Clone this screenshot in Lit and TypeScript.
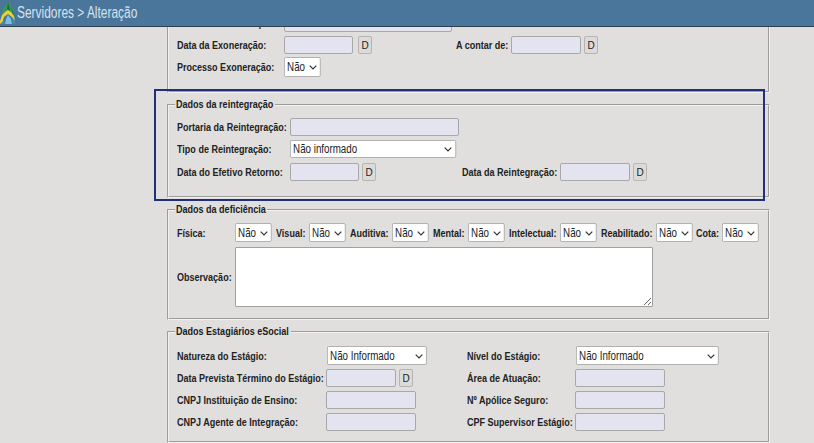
import { LitElement, html, css } from "lit";
import { customElement } from "lit/decorators.js";

@customElement("app-root")
export class AppRoot extends LitElement {
  static styles = css`
    :host { display: block; width: 814px; height: 443px; overflow: hidden; position: relative; background: #e0dfdd; font-family: "Liberation Sans", Arial, sans-serif; color: #1c1c1c; }
    .top { height: 26px; background: #4a769b; border-bottom: 1px solid #2f3f4c; display: flex; align-items: center; gap: 1px; color: #d5e2ee; box-sizing: content-box; }
    .top svg { display: block; flex: none; }
    .title { font-size: 16px; white-space: nowrap; transform: scaleX(.745); transform-origin: left center; }
    .scroll { height: 416px; overflow: hidden; padding-left: 167px; width: 603px; }
    fieldset { margin: 0 0 6px; padding: 0 8px; border: 2px groove #f2f1ef; box-sizing: border-box; width: 603px; display: block; min-width: 0; }
    fieldset.first { margin-top: -30px; height: 96px; }
    fieldset.reint { height: 99px; }
    fieldset.def { height: 116px; }
    fieldset.est { height: 117px; margin-bottom: 0; }
    legend { font-size: 11px; font-weight: bold; padding: 0 1px; margin-left: -2px; line-height: 12px; height: 12px; box-sizing: content-box; }
    legend span { display: block; white-space: nowrap; margin-top: -1px; transform: scaleX(.82); transform-origin: left center; }
    .l1 { width: 98px; } .l2 { width: 90px; } .l3 { width: 114px; }
    .row { display: flex; align-items: center; }
    label { display: block; font-size: 11px; font-weight: bold; white-space: nowrap; flex: none; transform: scaleX(.82); transform-origin: left center; color: #222; }
    input { box-sizing: border-box; height: 18px; background: #e4e3f0; border: 1px solid #a8a8a8; border-radius: 2px; padding: 0; margin: 0; flex: none; }
    button { box-sizing: border-box; width: 14px; height: 18px; padding: 0; margin: 0 0 0 3px; background: #dcdbd9; border: 1px solid #b4b4b4; border-radius: 2px; font: 10px "Liberation Sans", sans-serif; color: #222; flex: none; }
    button.far { margin-left: 5px; }
    .sel { position: relative; display: block; flex: none; height: 19px; }
    .sel.h18 { height: 18px; } .sel.h20 { height: 20px; }
    select { appearance: none; -webkit-appearance: none; display: block; box-sizing: border-box; height: 100%; width: calc(100% / 0.78); transform: scaleX(.78); transform-origin: left center; background: #fff; border: 1px solid #a8a8a8; border-radius: 2px; padding: 0 0 0 3px; margin: 0; font: 12.5px "Liberation Sans", sans-serif; color: #222; }
    .sel svg { position: absolute; right: 4px; top: 50%; margin-top: -2px; pointer-events: none; display: block; }
    textarea { box-sizing: border-box; width: 418px; height: 60px; background: #fff; border: 1px solid #a0a0a0; border-radius: 1px; margin: 0; padding: 0; flex: none; display: block; }
    .mark { position: absolute; left: 154px; top: 89px; width: 611px; height: 112px; box-sizing: border-box; border: 2px solid #1f2f7c; pointer-events: none; }

    .w26 { width: 26px; } .w33 { width: 33px; } .w35 { width: 35px; } .w42 { width: 42px; } .w51 { width: 51px; } .w55 { width: 55px; } .w58 { width: 58px; }
    .w69 { width: 69px; } .w70 { width: 70px; } .w90 { width: 90px; } .w98 { width: 98px; } .w107 { width: 107px; } .w108 { width: 108px; } .w109 { width: 109px; } .w113 { width: 113px; } .w149 { width: 149px; } .w168 { width: 168px; } .w169 { width: 169px; }
    .s37 { width: 37px; } .s100 { width: 100px; } .s143 { width: 143px; } .s166 { width: 166px; }
    .ml1 { margin-left: 1px; } .ml3 { margin-left: 3px; } .ml4 { margin-left: 4px; } .ml40 { margin-left: 40px; } .ml51 { margin-left: 51px; } .ml54 { margin-left: 54px; } .ml84 { margin-left: 84px; } .ml86 { margin-left: 86px; }
    .mt3 { margin-top: 3px; } .mt4 { margin-top: 4px; } .mt5 { margin-top: 5px; } .mt7 { margin-top: 7px; } .mt8 { margin-top: 8px; } .mt15 { margin-top: 15px; }
  `;

  private d(cls = "") { return html`<button class=${cls}>D</button>`; }
  private sel(text: string, cls: string) {
    return html`<span class="sel ${cls}"><select><option>${text}</option></select><svg width="8" height="5" viewBox="0 0 8 5"><path d="M.7.7 4 4 7.3.7" fill="none" stroke="#333" stroke-width="1.2"/></svg></span>`;
  }

  render() {
    return html`
      <div class="top">
        <svg width="16" height="26" viewBox="0 0 16 26">
          <path d="M1 15 L3 9 L5 7 L7 3 L9 2 L11 6 L13 9 L15 15 L12 13 L8 10 L4 13 Z" fill="#3a9a4f" />
          <path d="M8 2 L10 10 L9 11 L7 9 Z" fill="#1f6f3d" />
          <path d="M11 6 L15 15 L16 20 L12 13 Z" fill="#2b7d72" />
          <path d="M0 21 L2 15 L5 12 L8 10 L11 12 L14 16 L15 21 L12 17 L8 14 L4 17 L2 24 L0 24 Z" fill="#e8cf3c" />
          <path d="M5 24 L6 19 L8 15 L11 19 L12 24 Z" fill="#79bde6" />
          <path d="M0 24 L4 20 L4 24 Z M12 18 L15 22 L15 24 L13 24 Z" fill="#3f8fc0" />
        </svg>
        <span class="title">Servidores &gt; Alteração</span>
      </div>
      <div class="scroll">
        <fieldset class="first">
          <div class="row mt15">
            <label class="w107">Motivo da Exoneração:</label>
            <input class="w168" />
          </div>
          <div class="row mt4">
            <label class="w107">Data da Exoneração:</label>
            <input class="w69" />${this.d("far")}
            <label class="ml84 w55">A contar de:</label>
            <input class="w70" />${this.d()}
          </div>
          <div class="row mt3">
            <label class="w107">Processo Exoneração:</label>
            ${this.sel("Não", "s37 h20")}
          </div>
        </fieldset>

        <fieldset class="reint">
          <legend class="l1"><span>Dados da reintegração</span></legend>
          <div class="row mt7">
            <label class="w113">Portaria da Reintegração:</label>
            <input class="w169" />
          </div>
          <div class="row mt4">
            <label class="w113">Tipo de Reintegração:</label>
            ${this.sel("Não informado", "s166 h18")}
          </div>
          <div class="row mt5">
            <label class="w113">Data do Efetivo Retorno:</label>
            <input class="w69" />${this.d()}
            <label class="ml86 w98">Data da Reintegração:</label>
            <input class="w70" />${this.d()}
          </div>
        </fieldset>

        <fieldset class="def">
          <legend class="l2"><span>Dados da deficiência</span></legend>
          <div class="row mt7">
            <label class="w58">Física:</label>${this.sel("Não", "s37")}
            <label class="ml4 w33">Visual:</label>${this.sel("Não", "s37")}
            <label class="ml4 w42">Auditiva:</label>${this.sel("Não", "s37")}
            <label class="ml4 w35">Mental:</label>${this.sel("Não", "s37")}
            <label class="ml4 w51">Intelectual:</label>${this.sel("Não", "s37")}
            <label class="ml4 w55">Reabilitado:</label>${this.sel("Não", "s37")}
            <label class="ml3 w26">Cota:</label>${this.sel("Não", "s37")}
          </div>
          <div class="row mt5">
            <label class="w58">Observação:</label>
            <textarea></textarea>
          </div>
        </fieldset>

        <fieldset class="est">
          <legend class="l3"><span>Dados Estagiários eSocial</span></legend>
          <div class="row mt8">
            <label class="w149">Natureza do Estágio:</label>
            <span class="ml1"></span>${this.sel("Não Informado", "s100")}
            <label class="ml40 w109">Nível do Estágio:</label>
            ${this.sel("Não Informado", "s143")}
          </div>
          <div class="row mt4">
            <label class="w149">Data Prevista Término do Estágio:</label>
            <input class="w70" />${this.d()}
            <label class="ml54 w108">Área de Atuação:</label>
            <input class="w90" />
          </div>
          <div class="row mt4">
            <label class="w149">CNPJ Instituição de Ensino:</label>
            <input class="w90" />
            <label class="ml51 w108">Nº Apólice Seguro:</label>
            <input class="w90" />
          </div>
          <div class="row mt4">
            <label class="w149">CNPJ Agente de Integração:</label>
            <input class="w90" />
            <label class="ml51 w108">CPF Supervisor Estágio:</label>
            <input class="w90" />
          </div>
        </fieldset>
      </div>
      <div class="mark"></div>
    `;
  }
}
